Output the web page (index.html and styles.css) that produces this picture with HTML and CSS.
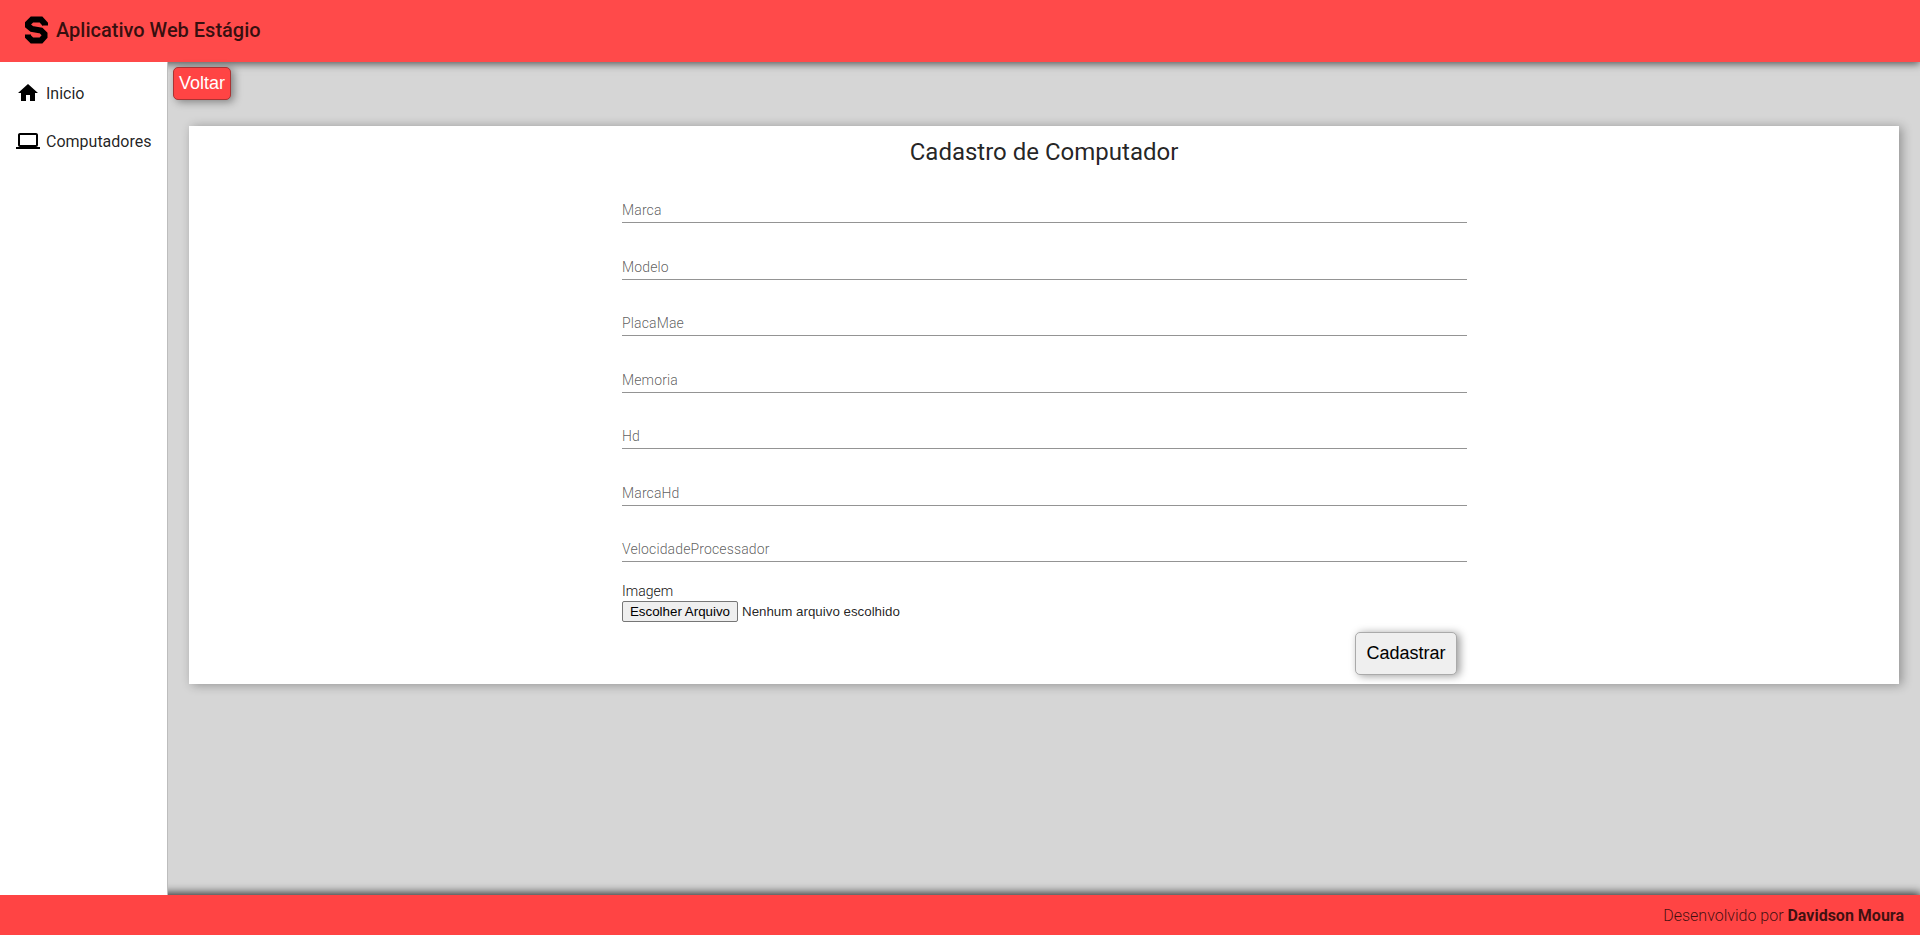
FILE: index.html
```html
<!DOCTYPE html>
<html lang="pt-BR">
<head>
<meta charset="utf-8">
<title>Aplicativo Web Estágio</title>
<link rel="stylesheet" href="styles.css">
</head>
<body>
<header class="header">
  <svg class="logo" viewBox="0 0 24 28"><path d="M21 9.500V8L17 3.500H8L4 7.500V9.800L7.800 13L17 14.500L20.500 18V20.500L17 24.500H8L4 20.500V18.500" fill="none" stroke="#000" stroke-width="6"/></svg>
  <span class="brand">Aplicativo Web Estágio</span>
</header>
<div class="body">
  <nav class="sidebar">
    <a class="nav-item"><svg class="nav-icon" viewBox="0 0 24 24"><path d="M10 20v-6h4v6h5v-8h3L12 3 2 12h3v8z"/></svg><span>Inicio</span></a>
    <a class="nav-item"><svg class="nav-icon" viewBox="0 0 24 24"><path d="M20 18c1.1 0 1.99-.9 1.99-2L22 6c0-1.100-.9-2-2-2H4c-1.100 0-2 .9-2 2v10c0 1.100.9 2 2 2H0v2h24v-2h-4zM4 6h16v10H4V6z"/></svg><span>Computadores</span></a>
  </nav>
  <main class="content">
    <button class="back">Voltar</button>
    <section class="card">
      <h1 class="title">Cadastro de Computador</h1>
      <form class="form">
        <div class="fields">
          <label class="field">Marca</label>
          <label class="field">Modelo</label>
          <label class="field">PlacaMae</label>
          <label class="field">Memoria</label>
          <label class="field">Hd</label>
          <label class="field">MarcaHd</label>
          <label class="field">VelocidadeProcessador</label>
        </div>
        <div class="upload-label">Imagem</div>
        <div class="upload"><button type="button" class="choose">Escolher Arquivo</button><span class="filename">Nenhum arquivo escolhido</span></div>
        <div class="actions"><button type="button" class="submit">Cadastrar</button></div>
      </form>
    </section>
  </main>
</div>
<footer class="footer"><span>Desenvolvido por <strong>Davidson Moura</strong></span></footer>
</body>
</html>
```
FILE: styles.css
```css
* { box-sizing: border-box; }
body {
  margin: 0;
  height: 935px;
  display: flex;
  flex-direction: column;
  overflow: hidden;
  background: #d6d6d6;
  font-family: Roboto, sans-serif;
  color: rgba(0, 0, 0, .87);
}
.header {
  height: 62px;
  flex: none;
  display: flex;
  align-items: center;
  padding: 0 24px 3px;
  gap: 8px;
  background: #ff4a4a;
  box-shadow: 0 2px 8px rgba(0, 0, 0, .6);
}
.logo { width: 24px; height: 28px; }
.brand { font-size: 20px; font-weight: 500; line-height: 32px; color: rgba(0, 0, 0, .8); }
.body { flex: 1; display: flex; min-height: 0; }
.sidebar {
  width: 168px;
  flex: none;
  position: relative;
  padding-top: 7px;
  background: #fff;
  border-right: 1px solid #bdbdbd;
}
.nav-item {
  height: 48px;
  display: flex;
  align-items: center;
  padding-left: 16px;
  gap: 6px;
  font-size: 16px;
}
.nav-icon { width: 24px; height: 24px; fill: #000; }
.content { flex: 1; padding: 5px 21px 0 5px; }
.back {
  display: block;
  width: 58px;
  height: 33px;
  padding: 0 0 2px;
  font: 18px/20px "Liberation Sans", Arial, sans-serif;
  color: #fff;
  background: #ff4444;
  border: 1px solid #a33;
  border-radius: 5px;
  box-shadow: 3px 2px 8px rgba(0, 0, 0, .4);
}
.card {
  height: 558px;
  margin: 26px 0 0 16px;
  padding-top: 10px;
  background: #fff;
  box-shadow: 3px 1px 10px rgba(0, 0, 0, .32);
}
.title { margin: 0; text-align: center; font-size: 24px; font-weight: 400; line-height: 32px; }
.form { width: 845px; margin: 0 0 0 433px; }
.fields { display: flex; flex-direction: column; padding-top: 28px; }
.field {
  height: 56.5px;
  padding-top: 4px;
  font-size: 14px;
  font-weight: 300;
  line-height: 20px;
  letter-spacing: .13px;
  color: rgba(0, 0, 0, .65);
  background: linear-gradient(#949494, #949494) 0 26px / 100% 1px no-repeat;
}
.upload-label { margin-top: -11px; font-size: 14px; line-height: 20px; font-weight: 300; color: #111; }
.upload { display: flex; align-items: center; gap: 4px; height: 21px; }
.choose {
  width: 116px;
  height: 21px;
  padding: 0;
  font: 13.333px/15px "Liberation Sans", Arial, sans-serif;
  color: #000;
  background: #efefef;
  border: 1px solid #767676;
  border-radius: 2px;
}
.filename { font: 13.333px/15px "Liberation Sans", Arial, sans-serif; }
.actions { display: flex; justify-content: flex-end; padding: 10px 10px 0 0; }
.submit {
  width: 102px;
  height: 43px;
  padding: 0 0 1px;
  font: 18px/20px "Liberation Sans", Arial, sans-serif;
  color: #000;
  background: #efefef;
  border: 1px solid #aaa;
  border-radius: 5px;
  box-shadow: 3px 1px 8px rgba(0, 0, 0, .4);
}
.footer {
  height: 40px;
  flex: none;
  display: flex;
  align-items: center;
  justify-content: flex-end;
  padding-right: 16px;
  font-size: 16px;
  font-weight: 300;
  color: rgba(0, 0, 0, .75);
  background: #ff4444;
  box-shadow: 0 -1px 9px 1px rgba(0, 0, 0, .8);
}
.footer strong { font-weight: 700; }
```
